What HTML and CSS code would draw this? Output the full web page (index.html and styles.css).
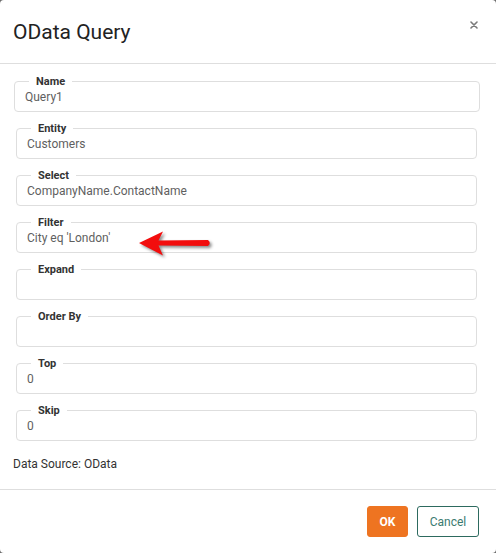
FILE: index.html
```html
<!DOCTYPE html>
<html lang="en">
<head>
<meta charset="utf-8">
<title>OData Query</title>
<link rel="stylesheet" href="styles.css">
</head>
<body>
<div class="dialog">
  <header class="dialog-header">
    <h1 class="dialog-title">OData Query</h1>
    <button class="close-btn" aria-label="Close">
      <svg width="8" height="8" viewBox="0 0 8 8"><path d="M1 1L7 7M7 1L1 7" stroke="#7a7a7a" stroke-width="1.6" stroke-linecap="round"/></svg>
    </button>
  </header>
  <main class="dialog-body">
    <fieldset class="field field-wide"><legend>Name</legend><div class="value">Query1</div></fieldset>
    <fieldset class="field"><legend>Entity</legend><div class="value">Customers</div></fieldset>
    <fieldset class="field"><legend>Select</legend><div class="value">CompanyName.ContactName</div></fieldset>
    <fieldset class="field field-filter"><legend>Filter</legend><div class="value">City eq 'London'</div>
      <svg class="arrow" width="80" height="32" viewBox="0 0 80 32">
        <path d="M4 16 L28 4.5 L23.5 13.5 L73 13 Q76.5 16 73 19 L23.5 18.5 L28 28.5 Z" fill="#f20d0d"/>
      </svg>
    </fieldset>
    <fieldset class="field"><legend>Expand</legend><div class="value"></div></fieldset>
    <fieldset class="field"><legend>Order By</legend><div class="value"></div></fieldset>
    <fieldset class="field"><legend>Top</legend><div class="value">0</div></fieldset>
    <fieldset class="field"><legend>Skip</legend><div class="value">0</div></fieldset>
    <p class="source">Data Source: OData</p>
  </main>
  <footer class="dialog-footer">
    <button class="btn btn-ok">OK</button>
    <button class="btn btn-cancel">Cancel</button>
  </footer>
</div>
</body>
</html>
```

FILE: styles.css
```css
html, body {
  margin: 0;
  padding: 0;
  background: #6b6b6b;
}
body {
  font-family: Roboto, "Liberation Sans", Arial, sans-serif;
  color: #333;
}
.dialog {
  width: 496px;
  height: 553px;
  background: #fff;
  border-radius: 4px;
  display: flex;
  flex-direction: column;
  box-sizing: border-box;
}
.dialog-header {
  height: 63px;
  border-bottom: 1px solid #dedede;
  display: flex;
  align-items: flex-start;
  justify-content: space-between;
  box-sizing: content-box;
}
.dialog-title {
  margin: 19px 0 0 13px;
  font-size: 21px;
  font-weight: 400;
  line-height: 26px;
  color: #222;
}
.close-btn {
  margin: 21px 18px 0 0;
  padding: 0;
  border: 0;
  background: none;
  width: 8px;
  height: 8px;
  display: flex;
}
.dialog-body {
  padding: 11px 16px 0 14px;
  flex: 1;
  display: flex;
  flex-direction: column;
  gap: 10px;
}
.field {
  margin: 0 3px 0 2px;
  padding: 0 10px 5px 10px;
  border: 1px solid #dedede;
  border-radius: 4px;
  min-width: 0;
  position: relative;
}
.field-wide {
  margin: 0;
}
.field legend {
  margin-left: 4px;
  padding: 0 7px;
  font-size: 11px;
  line-height: 13px;
  font-weight: 700;
  color: #333;
}
.value {
  height: 18px;
  line-height: 18px;
  font-size: 12px;
  color: #5f5f5f;
}
.arrow {
  position: absolute;
  left: 118px;
  top: -2px;
  filter: drop-shadow(2px 2px 1.5px rgba(0, 0, 0, 0.45));
}
.source {
  margin: 5px 0 0 -1px;
  font-size: 12px;
  line-height: 16px;
  color: #333;
}
.dialog-footer {
  height: 64px;
  border-top: 1px solid #dedede;
  box-sizing: border-box;
  display: flex;
  justify-content: flex-end;
  align-items: flex-start;
  gap: 9px;
  padding: 16px 17px 0 0;
}
.btn {
  height: 31px;
  border-radius: 3px;
  font-family: Roboto, "Liberation Sans", Arial, sans-serif;
  font-size: 12px;
  padding: 0;
  cursor: pointer;
}
.btn-ok {
  width: 41px;
  background: #ee7421;
  border: 1px solid #ee7421;
  color: #fff;
  font-weight: 700;
}
.btn-cancel {
  width: 62px;
  background: #fff;
  border: 1px solid #2d6a5f;
  color: #3b7b70;
}
```
